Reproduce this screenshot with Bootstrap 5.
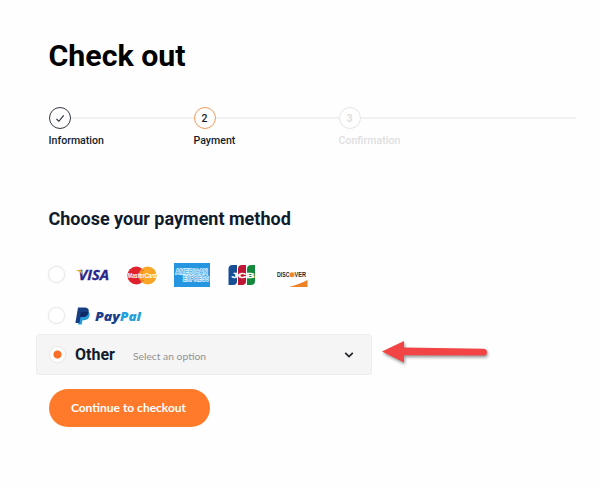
<!DOCTYPE html>
<html lang="en">
<head>
<meta charset="utf-8">
<meta name="viewport" content="width=device-width, initial-scale=1">
<title>Check out</title>
<link href="https://cdn.jsdelivr.net/npm/bootstrap@5.3.0/dist/css/bootstrap.min.css" rel="stylesheet">
<style>
body{font-family:Roboto,"Liberation Sans",sans-serif;color:#101c2c;background:#fefefe;height:488px;overflow:hidden}
.checkout{padding:38px 24px 0 36px}
.inset{padding-left:12.5px}
.page-title{font-size:30.3px;line-height:36px;font-weight:700;color:#000}
.steps{margin-top:33px}
.step{width:145px;font-size:10.6px;line-height:14px}
.step:last-child{width:237px}
.step-line{height:2px;background:#f1f1f1}
.dot{width:22px;height:22px;border:1px solid #343a42;font-size:10.5px;line-height:21px;flex:none}
.current .dot{border-color:#f09a5c}
.upcoming{color:#dedede}
.upcoming .dot{border-color:#e6e6e6}
.step-label{margin-top:5px;font-weight:500}
.upcoming .dot{font-weight:700}
.method-title{font-size:18px;line-height:22px;font-weight:700;margin-top:60px}
.card-row{margin-top:24px}
.method{height:41px;padding-left:12px}
.method .form-check-input{width:17px;height:17px;margin:0;border:1px solid #e8e8e8;background-color:#fff;box-shadow:0 0 2px #eee;flex:none}
.method .form-check-input:checked{background-image:radial-gradient(circle,#fb7029 3.7px,#fff 4.4px)}
.brand{flex:none;display:block;overflow:visible}
.other-row{margin-top:-2px}
.other-box{width:336px;background:#f5f5f5;border:1px solid #ededed;border-radius:3px}
.other-name{font-size:16px;font-weight:700;line-height:20px;width:58px}
.other-hint{font-family:Lato,sans-serif;font-size:10.3px;color:#929292;line-height:14px;padding-top:3px}
.pay-btn{font-family:Lato,sans-serif;font-size:12px;font-weight:700;width:161px;height:38px;margin:14px 0 0 12.5px;background:#ff7a2b;color:#fff;border:0;padding:0 1px 1px 0}
.pay-btn:hover{background:#f46e20;color:#fff}
</style>
<script src="https://cdn.jsdelivr.net/npm/bootstrap@5.3.0/dist/js/bootstrap.bundle.min.js"></script>
</head>
<body>
<main class="checkout">
  <h1 class="page-title inset mb-0">Check out</h1>
  <div class="steps inset d-flex">
    <div class="step">
      <div class="d-flex align-items-center"><span class="dot rounded-circle d-flex align-items-center justify-content-center"><svg width="10" height="9" viewBox="0 0 10 9" fill="none" stroke="#202832" stroke-width="1.1"><path d="M1.500 5 3.900 7.300 8.700 1.400"/></svg></span><span class="step-line flex-grow-1"></span></div>
      <div class="step-label">Information</div>
    </div>
    <div class="step current">
      <div class="d-flex align-items-center"><span class="dot rounded-circle text-center fw-medium">2</span><span class="step-line flex-grow-1"></span></div>
      <div class="step-label">Payment</div>
    </div>
    <div class="step upcoming">
      <div class="d-flex align-items-center"><span class="dot rounded-circle text-center">3</span><span class="step-line flex-grow-1"></span></div>
      <div class="step-label">Confirmation</div>
    </div>
  </div>
  <h2 class="method-title inset mb-0">Choose your payment method</h2>
  <form>
    <div class="card-row method d-flex align-items-center">
      <input class="form-check-input" type="radio" name="pay" aria-label="Card">
      <svg class="brand" style="margin-left:10px" width="36" height="26" viewBox="0 0 36 26"><text x="3.500" y="18.300" font-family="Open Sans" font-weight="700" font-style="italic" font-size="14.500" fill="#28268a" stroke="#28268a" stroke-width=".3" textLength="30.500" lengthAdjust="spacingAndGlyphs">VISA</text><path d="M1 8h4.200q1.300 0 1.600 1.300l.8 3.700Q5.500 9.500 1 8.300z" fill="#e7aa32"/></svg>
      <svg class="brand" style="margin-left:16px" width="30" height="26" viewBox="0 0 30 26"><circle cx="9.300" cy="13.500" r="9" fill="#e0222f"/><circle cx="20.700" cy="13.500" r="9" fill="#f9a526"/><path d="M15 7v13M14 8.500h3M14 18.500h3" stroke="#ee7b22" stroke-width="1"/><text x=".500" y="16" font-family="Liberation Sans" font-weight="700" font-style="italic" font-size="6.800" fill="#fff" textLength="29" lengthAdjust="spacingAndGlyphs">MasterCard</text></svg>
      <svg class="brand" style="margin-left:17px" width="36" height="26" viewBox="0 0 36 26"><rect y="1" width="36" height="24" fill="#2796e0"/><g font-family="Liberation Sans" font-weight="700" font-size="6.500" fill="#62b5ea" stroke="#dff3ff" stroke-width="1.300" paint-order="stroke"><text x="1.500" y="12" textLength="32" lengthAdjust="spacingAndGlyphs">AMERICAN</text><text x="9" y="18.800" textLength="26" lengthAdjust="spacingAndGlyphs">EXPRESS</text></g></svg>
      <svg class="brand" style="margin-left:18px" width="28" height="26" viewBox="0 0 28 26"><path d="M4.500 3H9v16q0 4-4 4H.5V7q0-4 4-4z" fill="#164f96"/><path d="M14 3h4v16q0 4-4 4h-4V7q0-4 4-4z" fill="#bd1735"/><path d="M23.500 3H27v16q0 4-4 4h-4V7q0-4 4.500-4z" fill="#14883b"/><text x="3.500" y="16.200" font-family="Liberation Sans" font-weight="700" font-size="8" fill="#fff" stroke="#fff" stroke-width=".4" textLength="23" lengthAdjust="spacingAndGlyphs">JCB</text></svg>
      <svg class="brand" style="margin-left:21px" width="31" height="26" viewBox="0 0 31 26"><g font-family="Liberation Sans" font-weight="700" font-size="6.400" fill="#292929"><text y="15" textLength="12.500" lengthAdjust="spacingAndGlyphs">DISC</text><text x="17.500" y="15" textLength="11.500" lengthAdjust="spacingAndGlyphs">VER</text></g><circle cx="15" cy="12.800" r="2.500" fill="#ee8a29"/><path d="M12 25Q23 22 30.500 18v7z" fill="#ee8126"/></svg>
    </div>
    <div class="method d-flex align-items-center">
      <input class="form-check-input" type="radio" name="pay" aria-label="PayPal">
      <svg class="brand" style="margin-left:9.500px" width="67" height="20" viewBox="0 0 67 20"><path d="M6 5h6q3.600 1 2.400 5-1 4.300-6 4.300H7.500l-.8 4.200H3z" fill="#249bd6"/><path d="M3 1.500h6.500q5 0 4.200 4.500-.8 5-6.500 5H5.500l-1 6H.4z" fill="#173e80"/><path d="M6 6h5.500q1 0 2 .5-1.200 4.500-6.300 4.500H5.200z" fill="#112a66"/><g font-family="Open Sans" font-weight="800" font-style="italic" font-size="12.500"><text x="20" y="15" fill="#193f8b" textLength="25" lengthAdjust="spacingAndGlyphs">Pay</text><text x="45" y="15" fill="#249fdc" textLength="21" lengthAdjust="spacingAndGlyphs">Pal</text></g></svg>
    </div>
    <div class="other-row d-flex align-items-center">
      <label class="other-box method d-flex align-items-center">
        <input class="form-check-input" type="radio" name="pay" checked>
        <span class="other-name" style="margin-left:9px">Other</span>
        <span class="other-hint">Select an option</span>
        <svg class="ms-auto" style="margin-right:17px" width="10" height="8" viewBox="0 0 10 8" fill="none" stroke="#20242a" stroke-width="1.700"><path d="M1.200 1.800 5 5.600 8.800 1.800"/></svg>
      </label>
      <svg class="brand" style="margin-left:10px;filter:drop-shadow(1px 2px 1.500px #0006)" width="106" height="26" viewBox="0 0 106 26"><path d="M0 8.500 22-2v6.600L101 5.800q4 0 4 3.400t-4 3.400L22 12.200v7.300z" transform="translate(0 1)" fill="#f24444"/></svg>
    </div>
    <button class="btn pay-btn rounded-pill" type="button">Continue to checkout</button>
  </form>
</main>
</body>
</html>
